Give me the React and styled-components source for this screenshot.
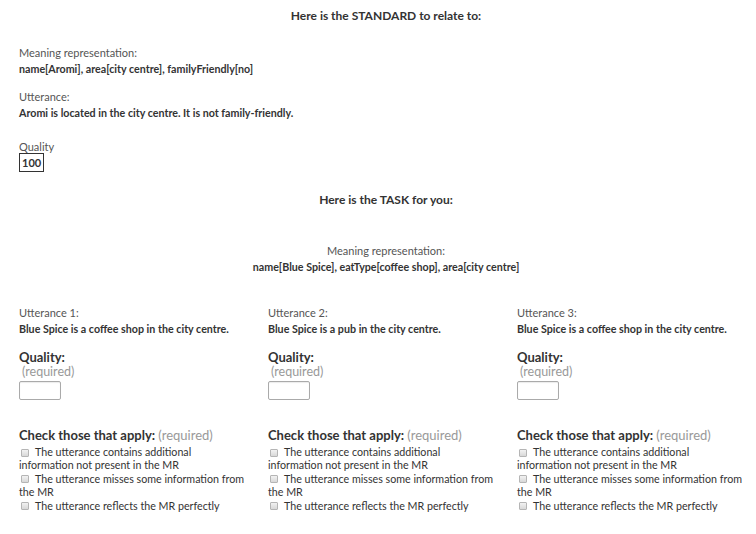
import React from 'react';
import styled, { createGlobalStyle } from 'styled-components';

const GlobalStyle = createGlobalStyle`
body {
  margin: 0;
  background: #fff;
  font-family: Lato, "Open Sans", sans-serif;
  color: #333;
}
`;

const Page = styled.div`
padding: 8px 3px 20px 19px;
font-size: 11px;
`;

const Title = styled.div`
text-align: center;
font-weight: bold;
font-size: 12px;
line-height: 16px;
color: #333;
margin-top: ${(p) => p.top || 0}px;
`;

const Field = styled.div`
margin-top: ${(p) => p.top || 0}px;
text-align: ${(p) => (p.center ? 'center' : 'left')};
line-height: 16px;
`;

const Label = styled.div`
color: #555;
`;

const Value = styled.div`
font-weight: bold;
font-size: 10.7px;
line-height: 15px;
color: #333;
`;

const QualityLabel = styled.div`
margin-top: 20px;
line-height: 13px;
color: #555;
`;

const ScoreBox = styled.span`
display: inline-block;
border: 1px solid #333;
padding: 0 2px;
font-weight: bold;
line-height: 17px;
color: #333;
`;

const Columns = styled.div`
display: grid;
grid-template-columns: repeat(3, 249px);
margin-top: 31px;
`;

const Column = styled.div`
padding-right: 23px;
`;

const Heading = styled.div`
font-size: 13px;
font-weight: bold;
line-height: 17px;
color: #333;
margin-top: ${(p) => p.top || 0}px;
white-space: nowrap;
`;

const Required = styled.span`
font-weight: normal;
color: #999;
`;

const RequiredLine = styled.div`
font-size: 12.5px;
line-height: 12px;
color: #999;
padding-left: 3px;
`;

const QualityInput = styled.input`
display: block;
box-sizing: border-box;
width: 42px;
height: 19px;
margin: 3px 0 0;
border: 1px solid #aaa;
border-radius: 2px;
box-shadow: inset 0 1px 1px rgba(0, 0, 0, 0.08);
`;

const Options = styled.div`
margin-top: 1px;
font-size: 10.7px;
line-height: 13.4px;
color: #333;
`;

const Option = styled.label`
display: block;
`;

const Box = styled.input`
appearance: none;
width: 8px;
height: 8px;
margin: 0 6px 0 2px;
border: 1px solid #b5b5b5;
border-radius: 1px;
background: linear-gradient(#f2f2f2, #d8d8d8);
vertical-align: -0.5px;
`;

const utterances = [
  'Blue Spice is a coffee shop in the city centre.',
  'Blue Spice is a pub in the city centre.',
  'Blue Spice is a coffee shop in the city centre.',
];

const options = [
  'The utterance contains additional information not present in the MR',
  'The utterance misses some information from the MR',
  'The utterance reflects the MR perfectly',
];

export default function App() {
  return (
    <>
      <GlobalStyle />
      <Page>
        <Title>Here is the STANDARD to relate to:</Title>
        <Field top={21}>
          <Label>Meaning representation:</Label>
          <Value>name[Aromi], area[city centre], familyFriendly[no]</Value>
        </Field>
        <Field top={13}>
          <Label>Utterance:</Label>
          <Value>Aromi is located in the city centre. It is not family-friendly.</Value>
        </Field>
        <QualityLabel>Quality</QualityLabel>
        <ScoreBox>100</ScoreBox>

        <Title top={20}>Here is the TASK for you:</Title>
        <Field top={35} center>
          <Label>Meaning representation:</Label>
          <Value>name[Blue Spice], eatType[coffee shop], area[city centre]</Value>
        </Field>

        <Columns>
          {utterances.map((u, i) => (
            <Column key={i}>
              <Field>
                <Label>Utterance {i + 1}:</Label>
                <Value>{u}</Value>
              </Field>
              <Heading top={13}>Quality:</Heading>
              <RequiredLine>(required)</RequiredLine>
              <QualityInput type="text" />
              <Heading top={27}>
                Check those that apply: <Required>(required)</Required>
              </Heading>
              <Options>
                {options.map((o) => (
                  <Option key={o}>
                    <Box type="checkbox" />
                    {o}
                  </Option>
                ))}
              </Options>
            </Column>
          ))}
        </Columns>
      </Page>
    </>
  );
}
